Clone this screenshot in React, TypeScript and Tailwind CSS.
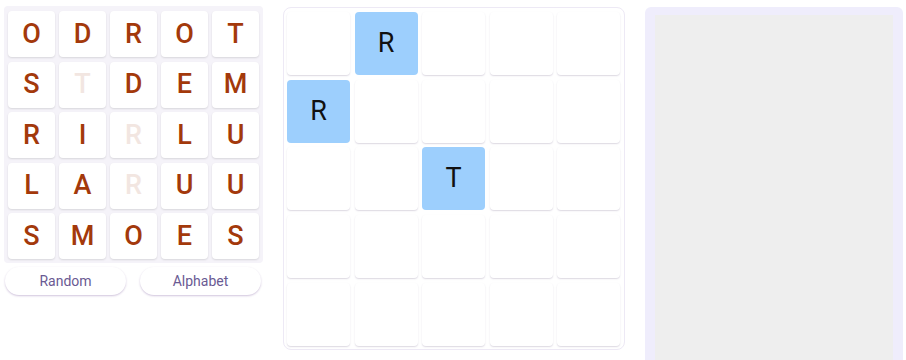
import React from "react";

// Letter board: [letter, faded]
const BOARD: [string, boolean][][] = [
  [["O", false], ["D", false], ["R", false], ["O", false], ["T", false]],
  [["S", false], ["T", true], ["D", false], ["E", false], ["M", false]],
  [["R", false], ["I", false], ["R", true], ["L", false], ["U", false]],
  [["L", false], ["A", false], ["R", true], ["U", false], ["U", false]],
  [["S", false], ["M", false], ["O", false], ["E", false], ["S", false]],
];

// Placed letters on the 5x5 grid
const PLACED: Record<string, string> = {
  "0-1": "R",
  "1-0": "R",
  "2-2": "T",
};

function LetterTile({ letter, faded }: { letter: string; faded: boolean }) {
  return (
    <div className="w-[47px] h-[46px] bg-white rounded-[4px] shadow-[0_1px_2px_rgba(0,0,0,0.12)] flex items-center justify-center">
      <span className={`text-[27px] font-medium leading-none ${faded ? "text-[#f2e6e1]" : "text-[#a3390b]"}`}>
        {letter}
      </span>
    </div>
  );
}

function GridCell({ letter }: { letter?: string }) {
  return (
    <div
      className={`w-[63px] h-[63px] rounded-[4px] flex items-center justify-center ${
        letter ? "bg-[#9dcffd]" : "bg-white shadow-[0_1px_1.5px_rgba(60,40,90,0.18)]"
      }`}
    >
      {letter && <span className="text-[27px] leading-none text-[#111]">{letter}</span>}
    </div>
  );
}

export default function App() {
  return (
    <div className="w-[906px] h-[360px] overflow-hidden bg-white flex items-start font-['Roboto',sans-serif]">
      {/* Left: letter bank + buttons */}
      <div className="w-[263px] pl-[4px] pt-[6px] flex flex-col">
        <div className="bg-[#f5f3f9] rounded-[4px] p-[4px] pt-[5px] flex flex-col gap-[4.5px]">
          {BOARD.map((row, r) => (
            <div key={r} className="flex gap-[4px]">
              {row.map(([l, f], c) => (
                <LetterTile key={c} letter={l} faded={f} />
              ))}
            </div>
          ))}
        </div>
        <div className="flex gap-[14px] mt-[4px] pl-[1px]">
          <button className="w-[121px] h-[28px] rounded-[16px] bg-white shadow-[0_1px_2px_rgba(100,60,140,0.3)] text-[14px] text-[#6a5a93]">
            Random
          </button>
          <button className="w-[121px] h-[28px] rounded-[16px] bg-white shadow-[0_1px_2px_rgba(100,60,140,0.3)] text-[14px] text-[#6a5a93]">
            Alphabet
          </button>
        </div>
      </div>

      {/* Middle: placement grid */}
      <div className="ml-[20px] mt-[7px] w-[342px] h-[343px] border border-[#ede9f5] rounded-[8px] pl-[3px] pt-[4px] flex flex-col gap-[4.7px]">
        {[0, 1, 2, 3, 4].map((r) => (
          <div key={r} className="flex gap-[4.5px]">
            {[0, 1, 2, 3, 4].map((c) => (
              <GridCell key={c} letter={PLACED[`${r}-${c}`]} />
            ))}
          </div>
        ))}
      </div>

      {/* Right: preview panel */}
      <div className="ml-[20px] mt-[7px] w-[258px] h-[400px] bg-[#efedfc] rounded-t-[6px] px-[10px] pt-[8px]">
        <div className="w-full h-full bg-[#eeeeee]" />
      </div>
    </div>
  );
}
